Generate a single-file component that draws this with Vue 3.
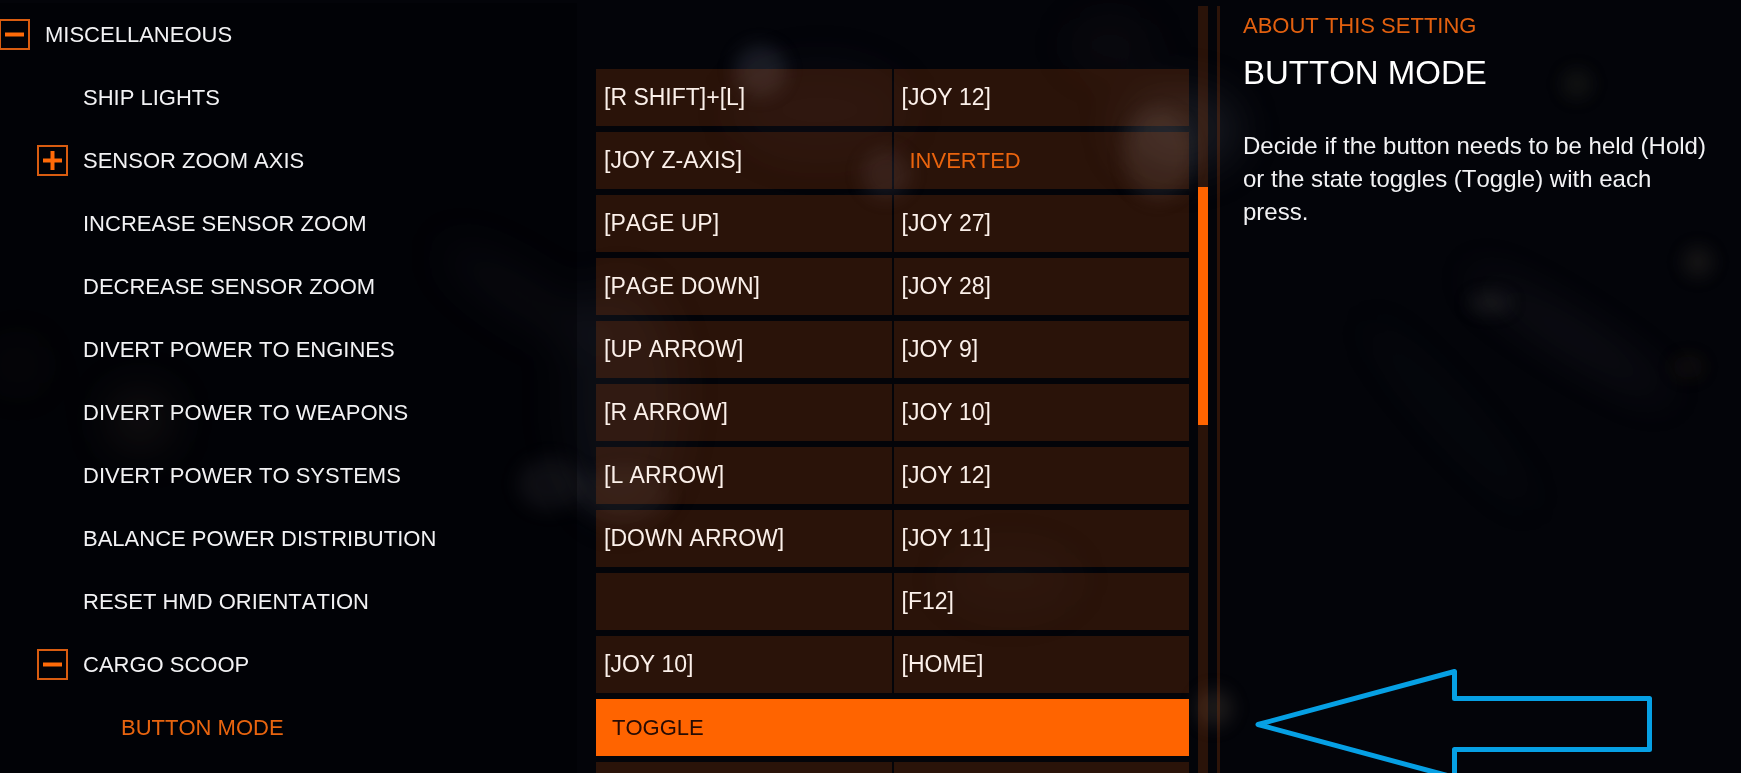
<script setup>
import { ref } from 'vue'

const rows = ref([
  { label: 'MISCELLANEOUS', level: 0, icon: 'minus', cells: [] },
  { label: 'SHIP LIGHTS', level: 1, cells: ['[R SHIFT]+[L]', '[JOY 12]'] },
  { label: 'SENSOR ZOOM AXIS', level: 1, icon: 'plus', cells: ['[JOY Z-AXIS]', 'INVERTED'], option: true },
  { label: 'INCREASE SENSOR ZOOM', level: 1, cells: ['[PAGE UP]', '[JOY 27]'] },
  { label: 'DECREASE SENSOR ZOOM', level: 1, cells: ['[PAGE DOWN]', '[JOY 28]'] },
  { label: 'DIVERT POWER TO ENGINES', level: 1, cells: ['[UP ARROW]', '[JOY 9]'] },
  { label: 'DIVERT POWER TO WEAPONS', level: 1, cells: ['[R ARROW]', '[JOY 10]'] },
  { label: 'DIVERT POWER TO SYSTEMS', level: 1, cells: ['[L ARROW]', '[JOY 12]'] },
  { label: 'BALANCE POWER DISTRIBUTION', level: 1, cells: ['[DOWN ARROW]', '[JOY 11]'] },
  { label: 'RESET HMD ORIENTATION', level: 1, cells: ['', '[F12]'] },
  { label: 'CARGO SCOOP', level: 1, icon: 'minus', cells: ['[JOY 10]', '[HOME]'] },
  { label: 'BUTTON MODE', level: 2, active: true, cells: ['TOGGLE'] },
  { label: '', level: 1, cells: ['', ''] },
])

const scroll = { start: 23.6, size: 31 }
</script>

<template>
  <main class="screen">
    <svg class="backdrop" viewBox="0 0 1741 773" preserveAspectRatio="none" aria-hidden="true">
      <defs>
        <filter id="soft" x="-80%" y="-80%" width="260%" height="260%"><feGaussianBlur stdDeviation="9" /></filter>
        <filter id="haze" x="-100%" y="-100%" width="300%" height="300%"><feGaussianBlur stdDeviation="22" /></filter>
      </defs>
      <g filter="url(#haze)">
        <ellipse cx="620" cy="400" rx="60" ry="120" fill="#8488a8" opacity=".07" />
        <ellipse cx="520" cy="295" rx="90" ry="22" fill="#9088a0" opacity=".09" transform="rotate(32 520 295)" />
        <ellipse cx="820" cy="110" rx="90" ry="50" fill="#9078a0" opacity=".05" />
        <ellipse cx="1110" cy="45" rx="45" ry="30" fill="#a06060" opacity=".05" />
        <ellipse cx="1180" cy="130" rx="60" ry="42" fill="#9098a8" opacity=".14" />
        <ellipse cx="1570" cy="335" rx="120" ry="16" fill="#a098b8" opacity=".08" transform="rotate(32 1570 335)" />
        <ellipse cx="1450" cy="415" rx="130" ry="18" fill="#8090a0" opacity=".03" transform="rotate(48 1450 415)" />
        <ellipse cx="1010" cy="580" rx="70" ry="35" fill="#8890a8" opacity=".04" />
        <ellipse cx="140" cy="420" rx="32" ry="30" fill="#b09078" opacity=".16" />
        <ellipse cx="18" cy="365" rx="22" ry="22" fill="#a09060" opacity=".08" />
      </g>
      <g filter="url(#soft)">
        <circle cx="760" cy="70" r="26" fill="#a8b0d0" opacity=".13" />
        <circle cx="886" cy="174" r="25" fill="#a8a8c0" opacity=".11" />
        <ellipse cx="1158" cy="155" rx="34" ry="46" fill="#a8a8b0" opacity=".1" />
        <ellipse cx="550" cy="484" rx="32" ry="26" fill="#a8a0b0" opacity=".13" />
        <ellipse cx="625" cy="495" rx="46" ry="28" fill="#a8a0b0" opacity=".07" />
        <circle cx="1214" cy="708" r="19" fill="#c0a880" opacity=".13" />
        <circle cx="1577" cy="84" r="15" fill="#909060" opacity=".1" />
        <circle cx="1698" cy="262" r="15" fill="#a89870" opacity=".12" />
        <ellipse cx="1490" cy="303" rx="22" ry="10" fill="#a0a088" opacity=".12" />
        <ellipse cx="1688" cy="367" rx="16" ry="11" fill="#a07040" opacity=".09" />
      </g>
    </svg>

    <ul class="settings">
      <li v-for="(row, i) in rows" :key="i" class="row">
        <div class="label" :class="['level-' + row.level, { active: row.active }]">
          <span class="slot">
            <button v-if="row.icon" class="expander" type="button" :aria-label="row.label" :aria-expanded="row.icon === 'minus'">
              <svg viewBox="0 0 31 31" aria-hidden="true">
                <rect x="1" y="1" width="29" height="29" fill="none" stroke="#d85c10" stroke-width="2" />
                <path d="M6 15.5H25" stroke="#ff6a08" stroke-width="4" />
                <path v-if="row.icon === 'plus'" d="M15.5 6V25" stroke="#ff6a08" stroke-width="4" />
              </svg>
            </button>
          </span>
          <span>{{ row.label }}</span>
        </div>
        <div v-if="row.cells.length" class="cells" :class="{ single: row.cells.length === 1 }">
          <button
            v-for="(cell, c) in row.cells"
            :key="c"
            type="button"
            class="cell"
            :class="{ selected: row.active, option: row.option && c === 1 }"
            :aria-label="cell || 'Unassigned'"
          >{{ cell }}</button>
        </div>
      </li>
    </ul>

    <div class="track">
      <div class="thumb" :style="{ top: scroll.start + '%', height: scroll.size + '%' }"></div>
    </div>
    <div class="divider"></div>

    <aside class="about">
      <p class="kicker">ABOUT THIS SETTING</p>
      <h1>BUTTON MODE</h1>
      <p class="text">Decide if the button needs to be held (Hold) or the state toggles (Toggle) with each press.</p>
      <svg class="arrow" viewBox="0 0 400 120" aria-hidden="true">
        <path d="M3 59.500L199.500 6.500V33.500H394.500V84.500H199.500V112.500Z" fill="none" stroke="#06a0e4" stroke-width="5" stroke-linejoin="round" />
      </svg>
    </aside>
  </main>
</template>

<style>
body {
  margin: 0;
  background: #030409;
}
</style>

<style scoped>
.screen {
  position: relative;
  display: grid;
  grid-template-columns: minmax(0, 1189fr) 10px 3px minmax(0, 512fr);
  column-gap: 9px;
  height: 100vh;
  padding-top: 6px;
  box-sizing: border-box;
  overflow: hidden;
  background: #030409;
  color: #f2f2f4;
  font-family: "Liberation Sans", Arial, sans-serif;
  font-size: 22px;
  font-kerning: none;
}
.backdrop {
  position: absolute;
  inset: 0;
  width: 100%;
  height: 100%;
}
.settings {
  position: relative;
  display: flex;
  flex-direction: column;
  gap: 6px;
  min-height: 0;
  margin: 0 0 0 -1px;
  padding: 0;
  list-style: none;
}
.row {
  display: grid;
  grid-template-columns: minmax(0, 578fr) minmax(0, 593fr);
  column-gap: 19px;
  flex: none;
  height: 57px;
}
.label {
  display: flex;
  align-items: center;
  gap: 15px;
  height: 63px;
  margin: -3px 0;
  box-sizing: border-box;
  background: rgba(0, 0, 3, 0.4);
  white-space: nowrap;
}
.level-1 {
  padding-left: 38px;
}
.level-2 {
  padding-left: 76px;
}
.label.active {
  color: #e8640f;
}
.slot {
  flex: none;
  width: 31px;
  height: 31px;
}
.expander {
  display: block;
  width: 31px;
  height: 31px;
  padding: 0;
  border: 0;
  background: none;
}
.expander svg {
  display: block;
}
.cells {
  display: grid;
  grid-template-columns: 1fr 1fr;
  gap: 2px;
}
.cells.single {
  grid-template-columns: 1fr;
}
.cell {
  height: 57px;
  padding: 0 8px;
  border: 0;
  border-radius: 0;
  background: rgba(255, 100, 10, 0.155);
  color: #fbf0ea;
  font: inherit;
  font-size: 23px;
  font-kerning: none;
  text-align: left;
}
.cell.option {
  padding: 0 16px;
  color: #ea640e;
  font-size: 22px;
}
.cell.selected {
  padding: 0 16px;
  background: #ff6400;
  color: #260b04;
  font-size: 22px;
}
.track {
  position: relative;
  background: rgba(255, 100, 10, 0.155);
}
.thumb {
  position: absolute;
  left: 0;
  right: 0;
  background: #ff6400;
}
.divider {
  position: relative;
  background: rgba(255, 100, 10, 0.17);
}
.about {
  position: relative;
  padding: 7px 22px 0 14px;
}
.kicker {
  margin: 0;
  color: #e2600f;
  line-height: 26px;
}
h1 {
  margin: 14px 0 36px;
  color: #fff;
  font-size: 33px;
  font-weight: 400;
  line-height: 40px;
}
.text {
  margin: 0;
  font-size: 24px;
  line-height: 33px;
}
.arrow {
  position: absolute;
  left: 26px;
  bottom: -12px;
  width: 400px;
  height: 120px;
}
</style>
